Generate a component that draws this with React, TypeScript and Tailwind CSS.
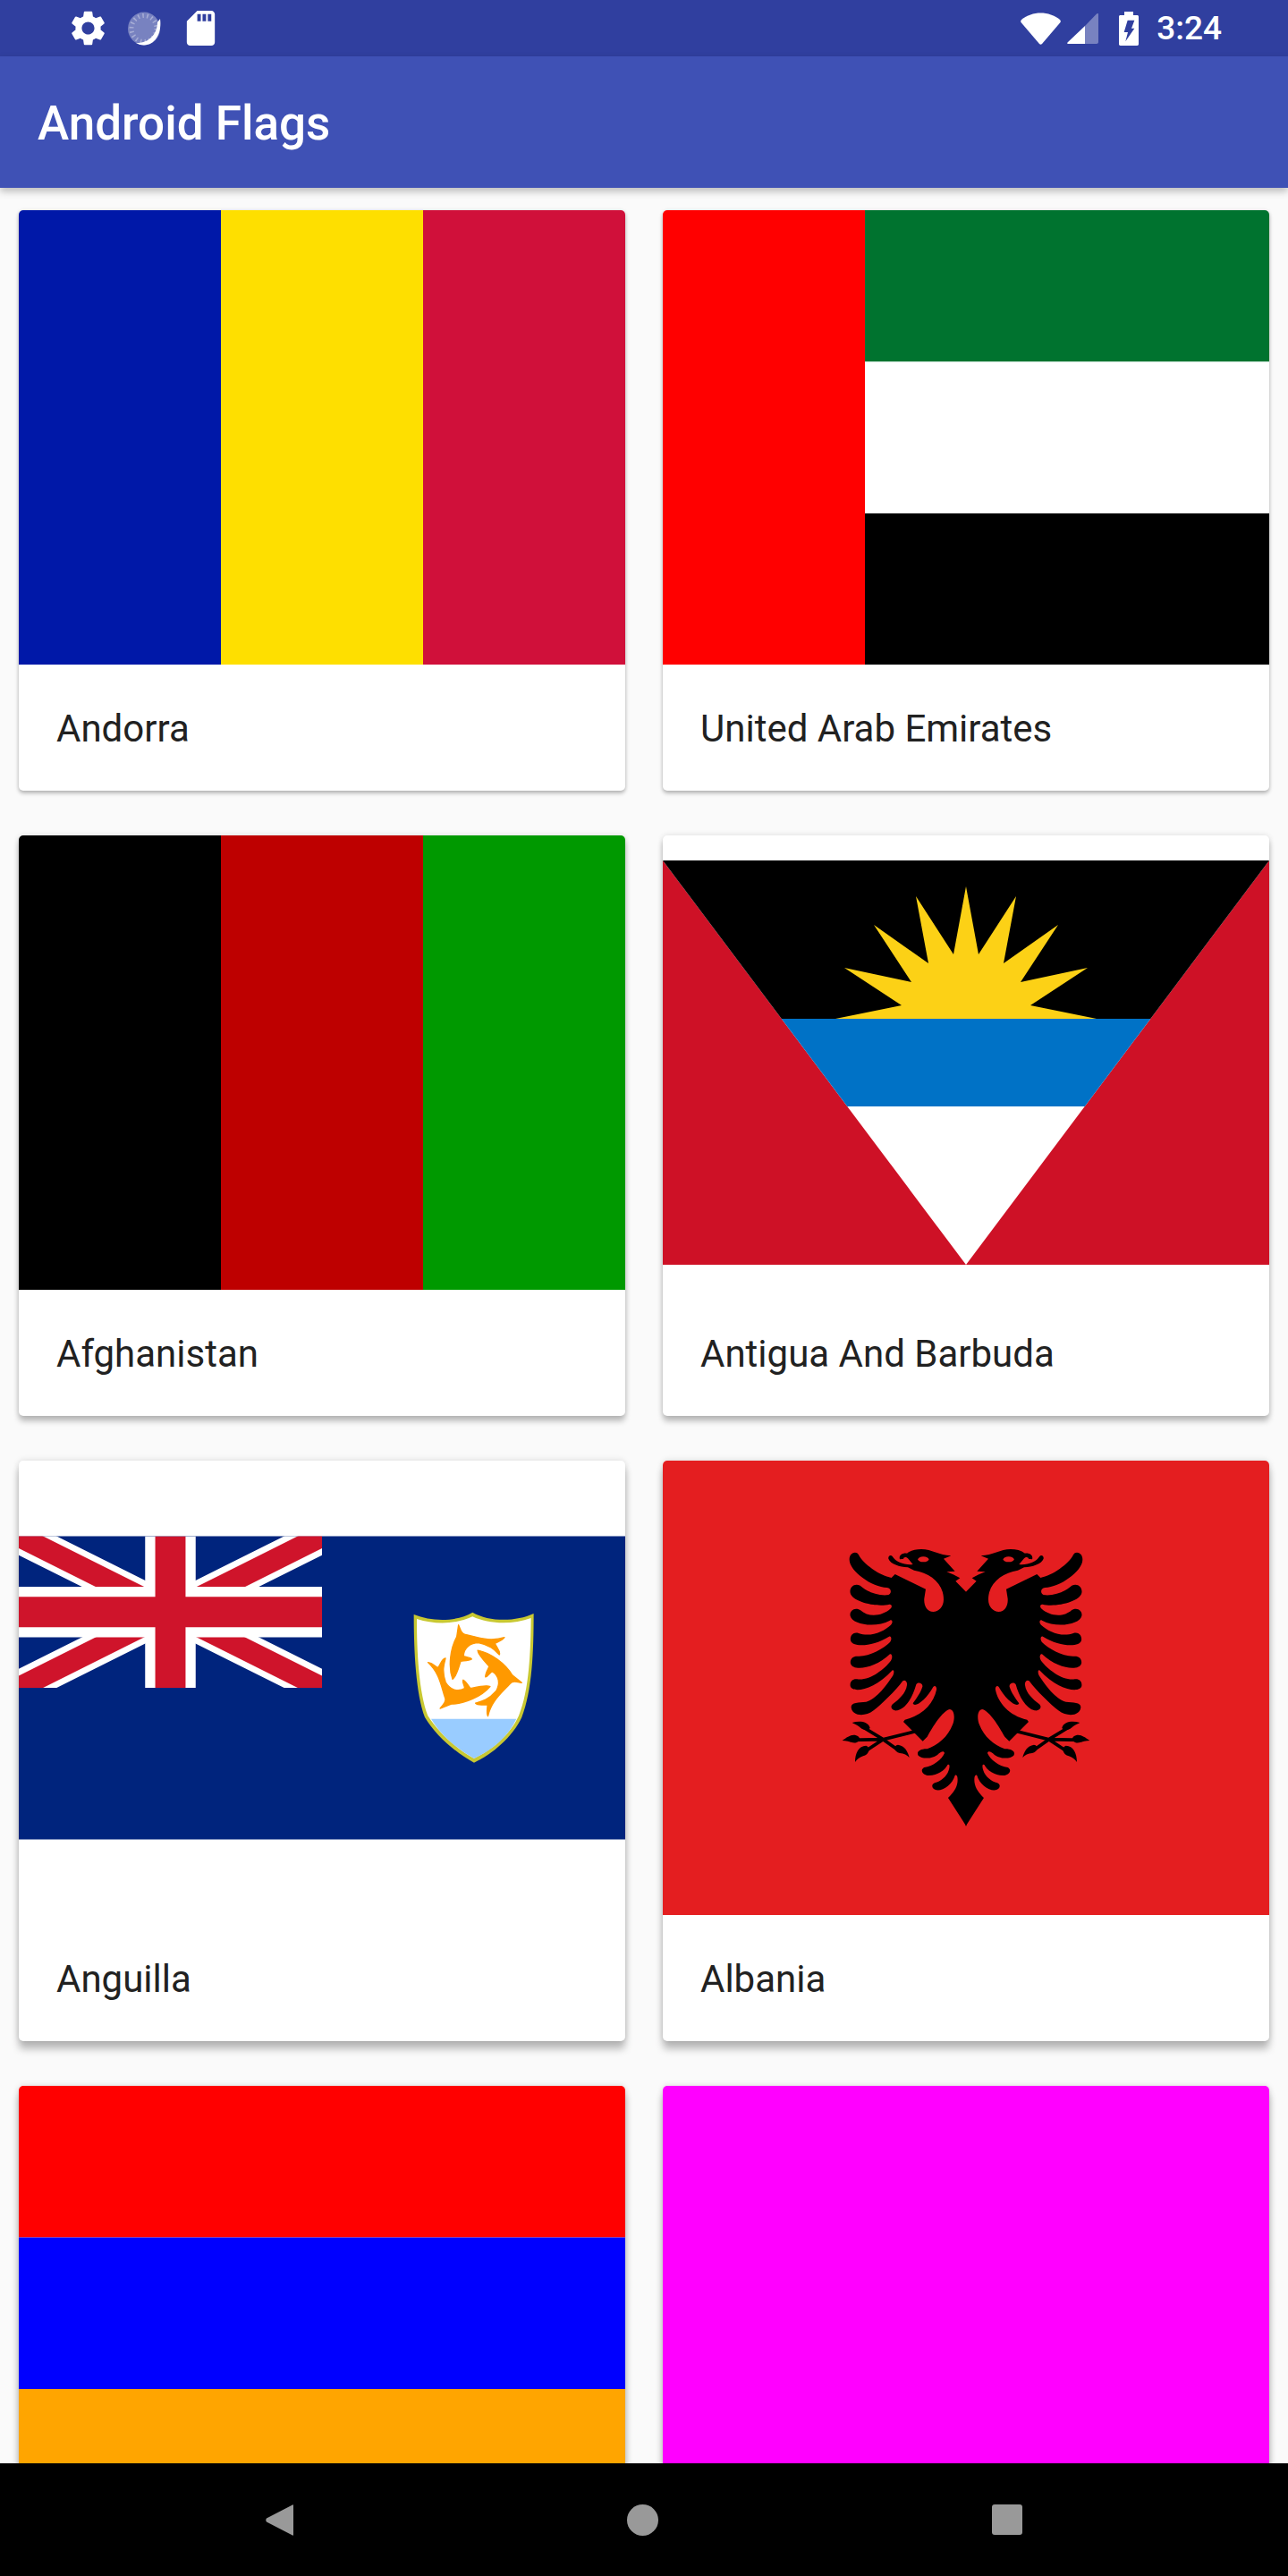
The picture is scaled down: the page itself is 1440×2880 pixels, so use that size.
import React from 'react'

const SETTINGS = "M19.14 12.94c.04-.3.06-.61.06-.94 0-.32-.02-.64-.07-.94l2.03-1.58c.18-.14.23-.41.12-.61l-1.92-3.32c-.12-.22-.37-.29-.59-.22l-2.39.96c-.5-.38-1.03-.7-1.62-.94l-.36-2.54c-.04-.24-.24-.41-.48-.41h-3.84c-.24 0-.43.17-.47.41l-.36 2.54c-.59.24-1.13.57-1.62.94l-2.39-.96c-.22-.08-.47 0-.59.22L2.74 8.87c-.12.21-.08.47.12.61l2.03 1.58c-.05.3-.09.63-.09.94s.02.64.07.94l-2.03 1.58c-.18.14-.23.41-.12.61l1.92 3.32c.12.22.37.29.59.22l2.39-.96c.5.38 1.03.7 1.62.94l.36 2.54c.05.24.24.41.48.41h3.84c.24 0 .44-.17.47-.41l.36-2.54c.59-.24 1.13-.56 1.62-.94l2.39.96c.22.08.47 0 .59-.22l1.92-3.32c.12-.22.07-.47-.12-.61l-2.01-1.58zM12 15.6c-1.98 0-3.6-1.62-3.6-3.6s1.62-3.6 3.6-3.6 3.6 1.62 3.6 3.6-1.62 3.6-3.6 3.6z"
const SD_CARD = "M18 2h-8L4.02 8 4 20c0 1.1.9 2 2 2h12c1.1 0 2-.9 2-2V4c0-1.1-.9-2-2-2zm-6 6h-2V4h2v4zm3 0h-2V4h2v4zm3 0h-2V4h2v4z"

// left half of the eagle, mirrored for the right half. coords are 3x px
const EAGLE_HALF = `M541 240 L505 203 L520 193 L497 181 L475 172 L503 170 L465 128 L490 118
C450 116 425 96 390 96 C372 96 355 100 342 110 C325 108 314 118 318 130 L335 128 L362 147
C335 150 305 140 293 120 C288 113 278 118 280 128 C286 146 318 155 345 157 L366 167
C420 176 465 210 465 265 C465 290 448 306 430 306 C410 306 398 285 400 262 L405 230 L302 180 L290 192
C250 185 195 145 180 115 C172 100 148 108 149 132 C150 170 225 224 275 225 C292 226 292 250 275 250
C235 252 205 235 185 218 C165 208 148 225 152 243 C158 272 240 292 283 281 C293 280 293 292 285 297
C262 318 215 328 185 300 C165 288 148 305 152 320 C158 348 235 362 285 335 C293 331 296 342 288 350
C265 372 220 392 180 378 C163 372 150 385 153 402 C158 425 225 425 282 389 C290 385 292 400 285 408
C262 430 215 458 175 455 C160 455 150 465 153 480 C160 505 230 500 285 448 C292 445 295 460 288 470
C265 500 215 538 175 532 C160 530 150 540 152 555 C158 580 230 570 292 503 C299 498 300 510 295 520
C275 550 240 600 205 608 C180 610 153 610 155 627 C158 655 200 660 230 637 C255 618 305 570 328 538 C335 532 344 540 342 552
C338 580 315 600 295 615 C283 625 292 640 310 637 C340 630 362 590 373 550 C378 540 396 545 394 557
C388 578 372 598 362 613 C368 630 408 600 430 558 C436 550 443 558 441 568
C432 612 395 655 335 668 L330 675 L395 740 L410 725
C430 690 460 640 485 633 C500 633 505 660 495 685 C480 725 445 755 410 766 C388 765 372 775 380 788
C395 803 432 797 445 785 C455 775 466 770 468 780 C460 800 430 825 400 828 C386 835 392 852 410 855
C440 858 470 838 478 820 C486 815 486 825 482 838 C475 860 455 875 435 880 C422 885 425 900 440 904
C462 908 495 885 503 855 C512 848 514 870 510 885 C505 905 490 920 480 930 L541 1025 Z`

const Dolphin = ({ rotate }: { rotate: number }) => (
  <path
    transform={`rotate(${rotate} 328 268)`}
    fill="#ff9900"
    stroke="#ff9900"
    strokeWidth="4"
    strokeLinejoin="round"
    d="M258 292 C243 250 250 190 272 150 L278 110 C285 125 285 140 300 142 C340 150 380 168 432 152 C422 165 405 168 400 172 C405 185 420 198 415 210 C400 195 385 178 345 170 C320 170 295 185 295 215 C305 220 320 218 322 225 C310 232 295 230 285 232 C278 255 270 285 258 292 Z"
  />
)

const Flag = ({ children }: { children: React.ReactNode }) => (
  <svg viewBox="0 0 678 508" className="block w-full h-full">{children}</svg>
)

const flags: Record<string, React.ReactNode> = {
  andorra: (
    <Flag>
      <rect x="0" y="0" width="226" height="508" fill="#0018a8" />
      <rect x="226" y="0" width="226" height="508" fill="#fedf00" />
      <rect x="452" y="0" width="226" height="508" fill="#d0103a" />
    </Flag>
  ),
  uae: (
    <Flag>
      <rect x="226" y="0" width="452" height="169.5" fill="#00732f" />
      <rect x="226" y="169.5" width="452" height="169.5" fill="#fff" />
      <rect x="226" y="339" width="452" height="169" fill="#000" />
      <rect x="0" y="0" width="226" height="508" fill="#ff0000" />
    </Flag>
  ),
  afghanistan: (
    <Flag>
      <rect x="0" y="0" width="226" height="508" fill="#000" />
      <rect x="226" y="0" width="226" height="508" fill="#be0000" />
      <rect x="452" y="0" width="226" height="508" fill="#009900" />
    </Flag>
  ),
  antigua: (
    <Flag>
      <g transform="translate(0 28)">
        <rect x="0" y="0" width="678" height="452" fill="#ce1126" />
        <path d="M0 0 H678 L339 452 Z" fill="#fff" />
        <clipPath id="ag-v"><path d="M0 0 H678 L339 452 Z" /></clipPath>
        <g clipPath="url(#ag-v)">
          <rect x="0" y="0" width="678" height="177" fill="#000" />
          <rect x="0" y="177" width="678" height="98" fill="#0072c6" />
        </g>
        <path
          d="M193 177 L267 162 L203 120 L278 136 L236 72 L297 115 L283 40 L325 105 L339 29 L353 105 L395 40 L381 115 L442 72 L400 136 L475 120 L411 162 L485 177 Z"
          fill="#fcd116"
        />
      </g>
    </Flag>
  ),
  anguilla: (
    <Flag>
      <rect x="0" y="84.5" width="678" height="339" fill="#00247d" />
      <g transform="translate(0 84.5) scale(5.65)">
        <clipPath id="uj-s"><rect x="0" y="0" width="60" height="30" /></clipPath>
        <g clipPath="url(#uj-s)">
          <path d="M0 0 L60 30 M60 0 L0 30" stroke="#fff" strokeWidth="6.7" />
          <path d="M0 0 L60 30 M60 0 L0 30" stroke="#cf142b" strokeWidth="4.3" />
          <path d="M30 0 V30 M0 15 H60" stroke="#fff" strokeWidth="10" />
          <path d="M30 0 V30 M0 15 H60" stroke="#cf142b" strokeWidth="6" />
        </g>
      </g>
      {/* shield, coords are 3x px */}
      <g transform="translate(399 147) scale(0.3333)">
        <path d="M128 75 C190 100 270 100 325 68 C380 100 470 100 530 72 C530 200 525 330 490 420 C460 485 390 545 330 572 C270 540 200 480 165 420 C135 340 128 200 128 75 Z" fill="#c8c832" />
        <path d="M138 90 C200 110 270 108 325 82 C380 108 460 110 521 87 C520 200 515 330 480 415 C450 480 390 530 330 558 C270 525 210 470 175 415 C145 335 138 200 138 90 Z" fill="#fff" />
        <path d="M186 425 H472 C445 485 390 530 330 558 C270 525 215 475 186 425 Z" fill="#99ccff" />
        <Dolphin rotate={0} />
        <Dolphin rotate={120} />
        <Dolphin rotate={240} />
      </g>
    </Flag>
  ),
  albania: (
    <Flag>
      <rect x="0" y="0" width="678" height="508" fill="#e41e20" />
      <g transform="translate(159 67) scale(0.3333)">
        {[0, 1].map((side) => (
          <g key={side} transform={side ? 'translate(1080 0) scale(-1 1)' : undefined}>
            <path d={EAGLE_HALF} fill="#000" />
            <ellipse cx="397" cy="130" rx="18" ry="9" fill="#e41e20" />
            <path d="M345 127 C338 120 330 124 330 128 L345 140 L362 147 Z" fill="#e41e20" />
            {/* leg and talons */}
            <path d="M375 706 L262 734 L205 772 M262 734 L150 736 M262 734 L190 690 M262 734 L310 768" stroke="#000" strokeWidth="11" fill="none" />
            <path d="M125 738 C145 725 160 712 180 725 C190 735 175 748 160 745 C150 742 138 738 125 738 Z" fill="#000" />
            <path d="M158 678 C180 672 210 672 218 695 C210 710 190 700 180 690 C172 684 165 682 158 678 Z" fill="#000" />
            <path d="M168 810 C168 780 180 755 205 755 C222 762 215 785 195 790 C182 795 175 800 168 810 Z" fill="#000" />
            <path d="M350 795 C345 775 335 755 312 752 C295 755 298 775 318 780 C332 782 342 785 350 795 Z" fill="#000" />
          </g>
        ))}
      </g>
    </Flag>
  ),
  armenia: (
    <Flag>
      <rect x="0" y="0" width="678" height="169.5" fill="#ff0000" />
      <rect x="0" y="169.5" width="678" height="169.5" fill="#0000ff" />
      <rect x="0" y="339" width="678" height="169" fill="#ffa500" />
    </Flag>
  ),
  magenta: (
    <Flag>
      <rect x="0" y="0" width="678" height="508" fill="#ff00ff" />
    </Flag>
  ),
}

// shadows get longer further down the screen, like android elevation
const ROW_1 = 'shadow-[0_3px_4px_rgba(0,0,0,0.25),0_0_4px_rgba(0,0,0,0.1)]'
const ROW_2 = 'shadow-[0_6px_6px_rgba(0,0,0,0.24),0_0_6px_rgba(0,0,0,0.12)]'
const ROW_3 = 'shadow-[0_9px_8px_rgba(0,0,0,0.25),0_0_7px_rgba(0,0,0,0.14)]'

const cards = [
  { id: 'andorra', name: 'Andorra', shadow: ROW_1 },
  { id: 'uae', name: 'United Arab Emirates', shadow: ROW_1 },
  { id: 'afghanistan', name: 'Afghanistan', shadow: ROW_2 },
  { id: 'antigua', name: 'Antigua And Barbuda', shadow: ROW_2 },
  { id: 'anguilla', name: 'Anguilla', shadow: ROW_3 },
  { id: 'albania', name: 'Albania', shadow: ROW_3 },
  { id: 'armenia', shadow: ROW_3 },
  { id: 'magenta', shadow: ROW_3 },
]

const StatusBar = () => (
  <div className="h-[63px] shrink-0 bg-[#303f9f] flex items-center justify-between pl-[75px] pr-[74px]">
    <div className="flex items-center">
      <svg viewBox="0 0 24 24" className="w-[47px] h-[47px]" fill="#fff"><path d={SETTINGS} /></svg>
      <svg viewBox="0 0 37 38" className="w-[37px] h-[38px] ml-[21px]">
        <ellipse cx="18" cy="19" rx="18" ry="18.5" fill="#fff" fillOpacity="0.35" />
        <ellipse cx="18" cy="19" rx="14" ry="14.5" fill="none" stroke="#fff" strokeOpacity="0.35" strokeWidth="5" strokeDasharray="1.5 3.5" />
        <path d="M36 8 C38 22 32 37 18 37.5 C14 37.5 11 36 9 35 C22 36 33 26 33 12 Z" fill="#fff" />
      </svg>
      <svg viewBox="0 0 24 24" className="w-[47px] h-[47px] ml-[21px]" fill="#fff"><path d={SD_CARD} /></svg>
    </div>
    <div className="flex items-center text-white">
      <svg viewBox="0 0 45 36" className="w-[45px] h-[36px]" fill="#fff">
        <path d="M1 8 C13 -2 32 -2 44 8 C45 9 45 10 44.500 11 L24 35 C23 36 22 36 21 35 L.5 11 C0 10 0 9 1 8 Z" />
      </svg>
      <svg viewBox="0 0 35 35" className="w-[35px] h-[35px] ml-[7px]">
        <path d="M20 15 L33 1.500 C34 .5 35 1 35 2 V33 C35 34 34 35 33 35 H20 Z" fill="#fff" fillOpacity="0.35" />
        <path d="M20 15 V35 H1 C0 35 0 34 .5 33.500 Z" fill="#fff" />
      </svg>
      <svg viewBox="516 36 66 114" className="w-[22px] h-[38px] ml-[23px]">
        <path d="M534 36 H564 V48 H577 C580 48 582 50 582 53 V145 C582 148 580 150 577 150 H521 C518 150 516 148 516 145 V53 C516 50 518 48 521 48 H534 Z" fill="#fff" />
        <path d="M545 65 H568 L558 92 H568 L538 136 L546 105 H533 Z" fill="#303f9f" />
      </svg>
      <span className="ml-[20px] text-[37px] leading-none font-medium font-['Roboto',sans-serif]">3:24</span>
    </div>
  </div>
)

const Card = ({ id, name, shadow }: { id: string; name?: string; shadow: string }) => (
  <div className={`bg-white rounded-[5px] overflow-hidden ${shadow}`}>
    <div className="h-[508px]">{flags[id]}</div>
    {name && (
      <div className="h-[141px] flex items-center pl-[42px] pt-[1px] text-[42px] text-[#212121] font-['Roboto',sans-serif]">
        {name}
      </div>
    )}
  </div>
)

const NavBar = () => (
  <div className="h-[126px] shrink-0 bg-black flex items-center justify-between px-[297px]">
    <svg viewBox="0 0 31 35" className="w-[31px] h-[35px]" fill="#999">
      <path d="M30 .5 C30.600 0 31 .5 31 1 V34 C31 34.500 30.600 35 30 34.500 L1 19.500 C0 18.500 0 16.500 1 15.500 Z" />
    </svg>
    <div className="w-[35px] h-[35px] rounded-full bg-[#999]" />
    <div className="w-[34px] h-[34px] rounded-[3px] bg-[#999]" />
  </div>
)

export default function App() {
  return (
    <div className="w-[1440px] h-[2880px] flex flex-col overflow-hidden bg-[#fafafa]">
      <StatusBar />
      <div className="relative z-10 h-[147px] shrink-0 bg-[#3f51b5] flex items-center pl-[42px] pt-[4px] shadow-[0_4px_8px_rgba(0,0,0,0.25)]">
        <h1 className="text-[53px] font-medium text-white font-['Roboto',sans-serif]">Android Flags</h1>
      </div>
      <div className="flex-1 overflow-hidden px-[21px] pt-[25px]">
        <div className="grid grid-cols-2 gap-x-[42px] gap-y-[50px]">
          {cards.map((c) => (
            <Card key={c.id} id={c.id} name={c.name} shadow={c.shadow} />
          ))}
        </div>
      </div>
      <NavBar />
    </div>
  )
}
